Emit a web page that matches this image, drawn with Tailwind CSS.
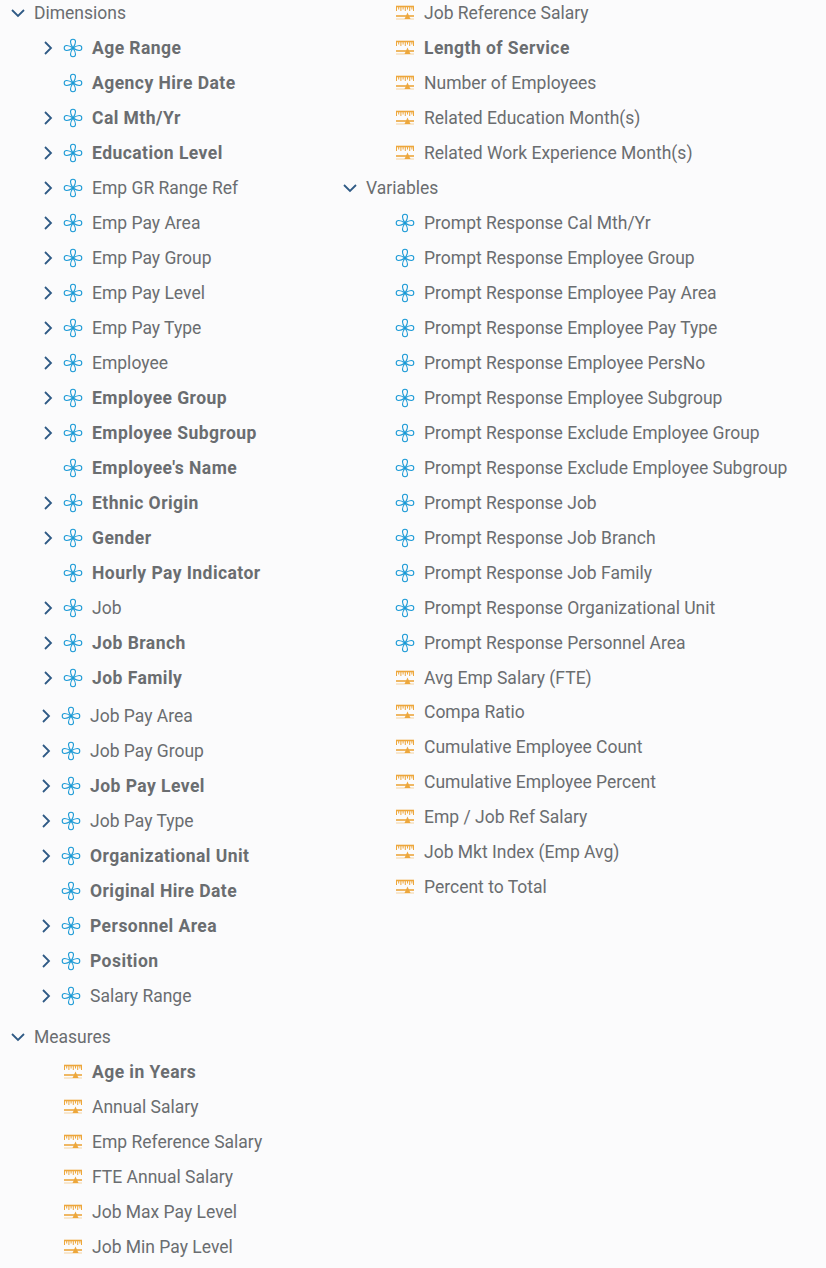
<!DOCTYPE html>
<html lang="en">
<head>
  <meta charset="UTF-8" />
  <title>Fields</title>
  <script src="https://cdn.jsdelivr.net/npm/@tailwindcss/browser@4"></script>
</head>
<body class="bg-[#fbfbfc] overflow-hidden h-[1268px] font-['Roboto','Noto_Sans',sans-serif] text-[17.5px] text-[#6a6d70]">
  <div id="tree" class="flex -mt-[5px]">
    <div class="w-[332px] shrink-0">
      <div id="dims"></div>
      <div id="dims2" class="mt-[3px] -ml-[2px]"></div>
      <div id="measures" class="mt-[6px]"></div>
    </div>
    <div>
      <div id="right1"></div>
      <div id="right2" class="-mt-[1px]"></div>
    </div>
  </div>
  <script>
    const chevDown = `<svg class="w-[16px] h-[16px] shrink-0" viewBox="0 0 16 16" fill="none" stroke="#2f5a85" stroke-width="1.800"><path d="M2 5l6 6 6-6"/></svg>`;
    const chevRight = `<svg class="w-[16px] h-[16px] shrink-0" viewBox="0 0 16 16" fill="none" stroke="#2f5a85" stroke-width="1.800"><path d="M5 2l6 6-6 6"/></svg>`;
    const dimIcon = `<svg class="w-[20px] h-[20px] shrink-0" viewBox="0 0 20 20" fill="none" stroke="#1b9ad6" stroke-width="1.100"><path d="M10 10C8 7 7.500 5.500 7.500 3.700a2.500 2.500 0 0 1 5 0c0 1.800-.5 3.300-2.500 6.300zM10 10c-2 3-2.500 4.500-2.500 6.300a2.500 2.500 0 0 0 5 0c0-1.800-.5-3.300-2.500-6.300zM10 10c-3-2-4.500-2.500-6.300-2.500a2.500 2.500 0 0 0 0 5c1.800 0 3.300-.5 6.300-2.500zM10 10c3-2 4.500-2.500 6.300-2.500a2.500 2.500 0 0 1 0 5c-1.800 0-3.300-.5-6.300-2.500z"/><circle cx="10" cy="10" r="1.200" fill="#1b9ad6" stroke="none"/></svg>`;
    const measureIcon = `<svg class="w-[20px] h-[16px] shrink-0" viewBox="0 0 20 16" fill="none" stroke="#eda73c" stroke-width="1"><path d="M1 1.500h18" stroke-width="1.600"/><path d="M1.500 1v5M3.700 1v3.500M5.900 1v5M8.100 1v3.500M10.300 1v5M12.500 1v3.500M14.700 1v5M16.900 1v3.500M18.500 1v5"/><path d="M1 11h18" stroke-width="1.600"/><path d="M1 14h18" stroke-width=".8" stroke-opacity=".6"/><path d="M12.500 7.500l-3 6.500h6z" fill="#eda73c" stroke="none"/></svg>`;

    // leading * = bold, leading ! = no expander
    function rows(list, icon, hasChevron) {
      return list.map(r => {
        const name = r.replace(/^[*!]+/, '');
        const flags = r.slice(0, r.length - name.length);
        const chev = hasChevron && !flags.includes('!') ? chevRight : '';
        return `<div class="h-[35px] flex items-center">
          <div class="w-[63px] shrink-0 flex justify-end pr-[7px]">${chev}</div>
          <div class="w-[29px] shrink-0 flex">${icon}</div>
          <span class="whitespace-nowrap pt-[2px] ${flags.includes('*') ? 'font-bold tracking-[0.45px]' : ''}">${name}</span>
        </div>`;
      }).join('');
    }
    function head(name) {
      return `<div class="h-[35px] flex items-center"><div class="w-[34px] shrink-0 flex pl-[10px]">${chevDown}</div><span class="pt-[2px]">${name}</span></div>`;
    }

    document.getElementById('dims').innerHTML = head('Dimensions') + rows(['*Age Range','!*Agency Hire Date','*Cal Mth/Yr','*Education Level','Emp GR Range Ref','Emp Pay Area','Emp Pay Group','Emp Pay Level','Emp Pay Type','Employee','*Employee Group','*Employee Subgroup','!*Employee\'s Name','*Ethnic Origin','*Gender','!*Hourly Pay Indicator','Job','*Job Branch','*Job Family'], dimIcon, true);
    document.getElementById('dims2').innerHTML = rows(['Job Pay Area','Job Pay Group','*Job Pay Level','Job Pay Type','*Organizational Unit','!*Original Hire Date','*Personnel Area','*Position','Salary Range'], dimIcon, true);
    document.getElementById('measures').innerHTML = head('Measures') + rows(['*Age in Years','Annual Salary','Emp Reference Salary','FTE Annual Salary','Job Max Pay Level','Job Min Pay Level'], measureIcon, false);
    document.getElementById('right1').innerHTML = rows(['Job Reference Salary','*Length of Service','Number of Employees','Related Education Month(s)','Related Work Experience Month(s)'], measureIcon, false)
      + head('Variables')
      + rows(['Prompt Response Cal Mth/Yr','Prompt Response Employee Group','Prompt Response Employee Pay Area','Prompt Response Employee Pay Type','Prompt Response Employee PersNo','Prompt Response Employee Subgroup','Prompt Response Exclude Employee Group','Prompt Response Exclude Employee Subgroup','Prompt Response Job','Prompt Response Job Branch','Prompt Response Job Family','Prompt Response Organizational Unit','Prompt Response Personnel Area'], dimIcon, false)
      + rows(['Avg Emp Salary (FTE)'], measureIcon, false);
    document.getElementById('right2').innerHTML = rows(['Compa Ratio','Cumulative Employee Count','Cumulative Employee Percent','Emp / Job Ref Salary','Job Mkt Index (Emp Avg)','Percent to Total'], measureIcon, false);
  </script>
</body>
</html>
